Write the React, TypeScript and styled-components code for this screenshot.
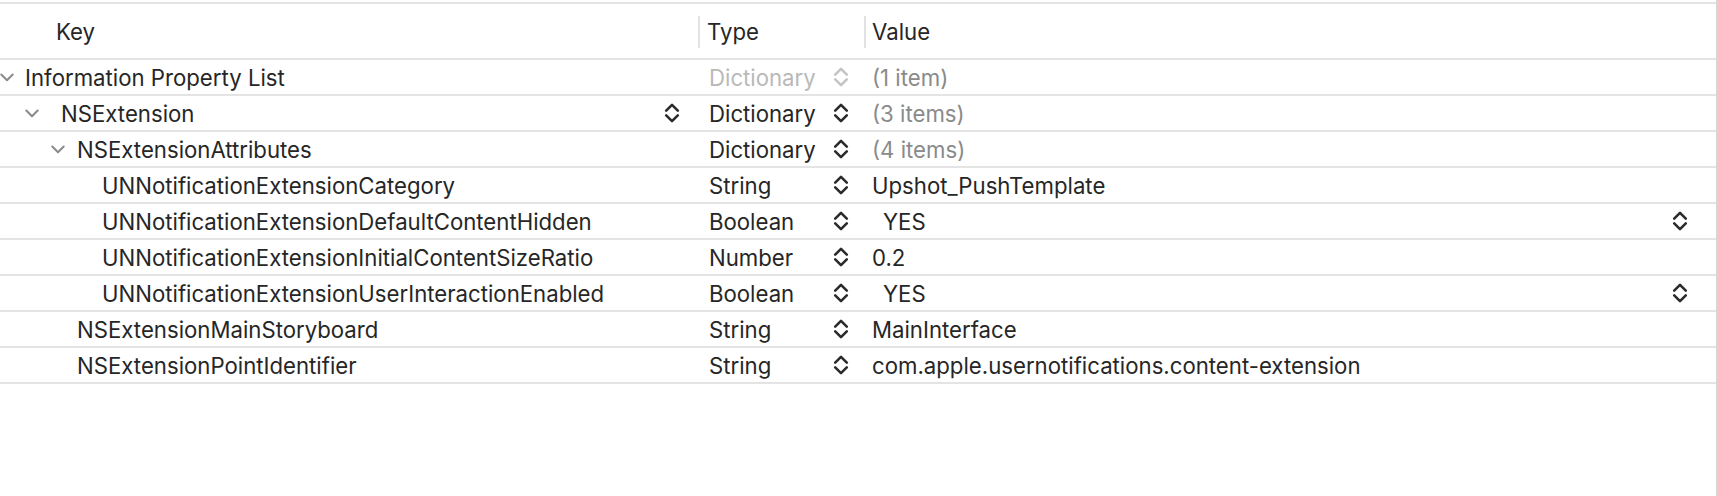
import React from 'react';
import styled, {createGlobalStyle} from 'styled-components';

const GlobalStyle = createGlobalStyle`
	html, body {
		margin: 0;
		padding: 0;
		background: #ffffff;
	}
	body {
		font-family: Inter, 'Noto Sans', 'Liberation Sans', sans-serif;
		-webkit-font-smoothing: antialiased;
	}
`;

interface PlistRow {
	key: string;
	textX: number;
	chevronX?: number;
	keyStepper?: boolean;
	type: string;
	typeDisabled?: boolean;
	value: string;
	muted?: boolean;
	popup?: boolean;
}

const rows: PlistRow[] = [
	{key: 'Information Property List', chevronX: 0, textX: 25, type: 'Dictionary', typeDisabled: true, value: '(1 item)', muted: true},
	{key: 'NSExtension', chevronX: 25, textX: 61, keyStepper: true, type: 'Dictionary', value: '(3 items)', muted: true},
	{key: 'NSExtensionAttributes', chevronX: 51, textX: 77, type: 'Dictionary', value: '(4 items)', muted: true},
	{key: 'UNNotificationExtensionCategory', textX: 102, type: 'String', value: 'Upshot_PushTemplate'},
	{key: 'UNNotificationExtensionDefaultContentHidden', textX: 102, type: 'Boolean', value: 'YES', popup: true},
	{key: 'UNNotificationExtensionInitialContentSizeRatio', textX: 102, type: 'Number', value: '0.2'},
	{key: 'UNNotificationExtensionUserInteractionEnabled', textX: 102, type: 'Boolean', value: 'YES', popup: true},
	{key: 'NSExtensionMainStoryboard', textX: 77, type: 'String', value: 'MainInterface'},
	{key: 'NSExtensionPointIdentifier', textX: 77, type: 'String', value: 'com.apple.usernotifications.content-extension'},
];

const Stepper = ({disabled}: {disabled?: boolean}) => (
	<StepperIcon viewBox="0 0 16 22" width="16" height="22" $disabled={disabled}>
		<polyline points="2.2,8.6 8,2.8 13.8,8.6" />
		<polyline points="2.2,13.4 8,19.2 13.8,13.4" />
	</StepperIcon>
);

const Disclosure = ({x}: {x: number}) => (
	<DisclosureIcon viewBox="0 0 14 9" width="14" height="9" style={{marginLeft: x}}>
		<polyline points="1.3,1.5 7,7.2 12.7,1.5" />
	</DisclosureIcon>
);

const App = () => {
	return (
		<>
			<GlobalStyle />
			<Page>
				<Table>
					<HeaderRow>
						<HeaderCell>
							<HeaderLabel $pad={56}>Key</HeaderLabel>
						</HeaderCell>
						<HeaderCell>
							<ColumnDivider />
							<HeaderLabel $pad={7}>Type</HeaderLabel>
						</HeaderCell>
						<HeaderCell>
							<ColumnDivider />
							<HeaderLabel $pad={6}>Value</HeaderLabel>
						</HeaderCell>
					</HeaderRow>
					{rows.map((row) => (
						<Row key={row.key}>
							<KeyCell>
								{row.chevronX !== undefined && <Disclosure x={row.chevronX} />}
								<KeyLabel
									style={{
										marginLeft:
											row.chevronX !== undefined
												? row.textX - row.chevronX - 14
												: row.textX,
									}}>
									{row.key}
								</KeyLabel>
								{row.keyStepper && (
									<KeyStepperSlot>
										<Stepper />
									</KeyStepperSlot>
								)}
							</KeyCell>
							<TypeCell>
								<TypeLabel $disabled={row.typeDisabled}>{row.type}</TypeLabel>
								<Stepper disabled={row.typeDisabled} />
							</TypeCell>
							<ValueCell>
								<ValueLabel $muted={row.muted} $popup={row.popup}>
									{row.value}
								</ValueLabel>
								{row.popup && <Stepper />}
							</ValueCell>
						</Row>
					))}
				</Table>
			</Page>
		</>
	);
};

const Page = styled.div`
	width: 1718px;
	height: 496px;
	box-sizing: border-box;
	padding-top: 2px;
	border-right: 2px solid #d6d6d6;
	background: #ffffff;
	color: #262626;
	font-size: 22.2px;
	overflow: hidden;
`;

const Table = styled.div`
	display: flex;
	flex-direction: column;
	border-top: 2px solid #e4e4e4;
`;

const grid = `
	display: grid;
	grid-template-columns: 698px 166px 1fr;
	box-sizing: border-box;
	border-bottom: 2px solid #e4e4e4;
`;

const HeaderRow = styled.div`
	${grid};
	height: 56px;
`;

const HeaderCell = styled.div`
	display: flex;
	align-items: center;
	min-width: 0;
`;

const ColumnDivider = styled.div`
	width: 2px;
	height: 32px;
	margin-top: 1px;
	background: #e2e2e2;
	flex: none;
`;

const HeaderLabel = styled.span<{$pad: number}>`
	padding-left: ${({$pad}) => $pad}px;
	white-space: nowrap;
`;

const Row = styled.div`
	${grid};
	height: 36px;
`;

const KeyCell = styled.div`
	display: flex;
	align-items: center;
	min-width: 0;
`;

const DisclosureIcon = styled.svg`
	flex: none;
	fill: none;
	stroke: #8a8a8a;
	stroke-width: 2;
	stroke-linecap: round;
	stroke-linejoin: round;
`;

const KeyLabel = styled.span`
	white-space: nowrap;
`;

const KeyStepperSlot = styled.div`
	display: flex;
	margin-left: auto;
	padding-right: 18px;
`;

const StepperIcon = styled.svg<{$disabled?: boolean}>`
	flex: none;
	fill: none;
	stroke: ${({$disabled}) => ($disabled ? '#c4c4c4' : '#2b2b2b')};
	stroke-width: 2.6;
	stroke-linecap: round;
	stroke-linejoin: round;
`;

const TypeCell = styled.div`
	display: flex;
	align-items: center;
	padding-left: 11px;
	padding-right: 15px;
	justify-content: space-between;
`;

const TypeLabel = styled.span<{$disabled?: boolean}>`
	color: ${({$disabled}) => ($disabled ? '#b9b9b9' : '#262626')};
	white-space: nowrap;
`;

const ValueCell = styled.div`
	display: flex;
	align-items: center;
	padding-left: 8px;
	padding-right: 28px;
	justify-content: space-between;
`;

const ValueLabel = styled.span<{$muted?: boolean; $popup?: boolean}>`
	color: ${({$muted}) => ($muted ? '#8a8a8a' : '#262626')};
	padding-left: ${({$popup}) => ($popup ? 11 : 0)}px;
	white-space: nowrap;
`;

export default App;
